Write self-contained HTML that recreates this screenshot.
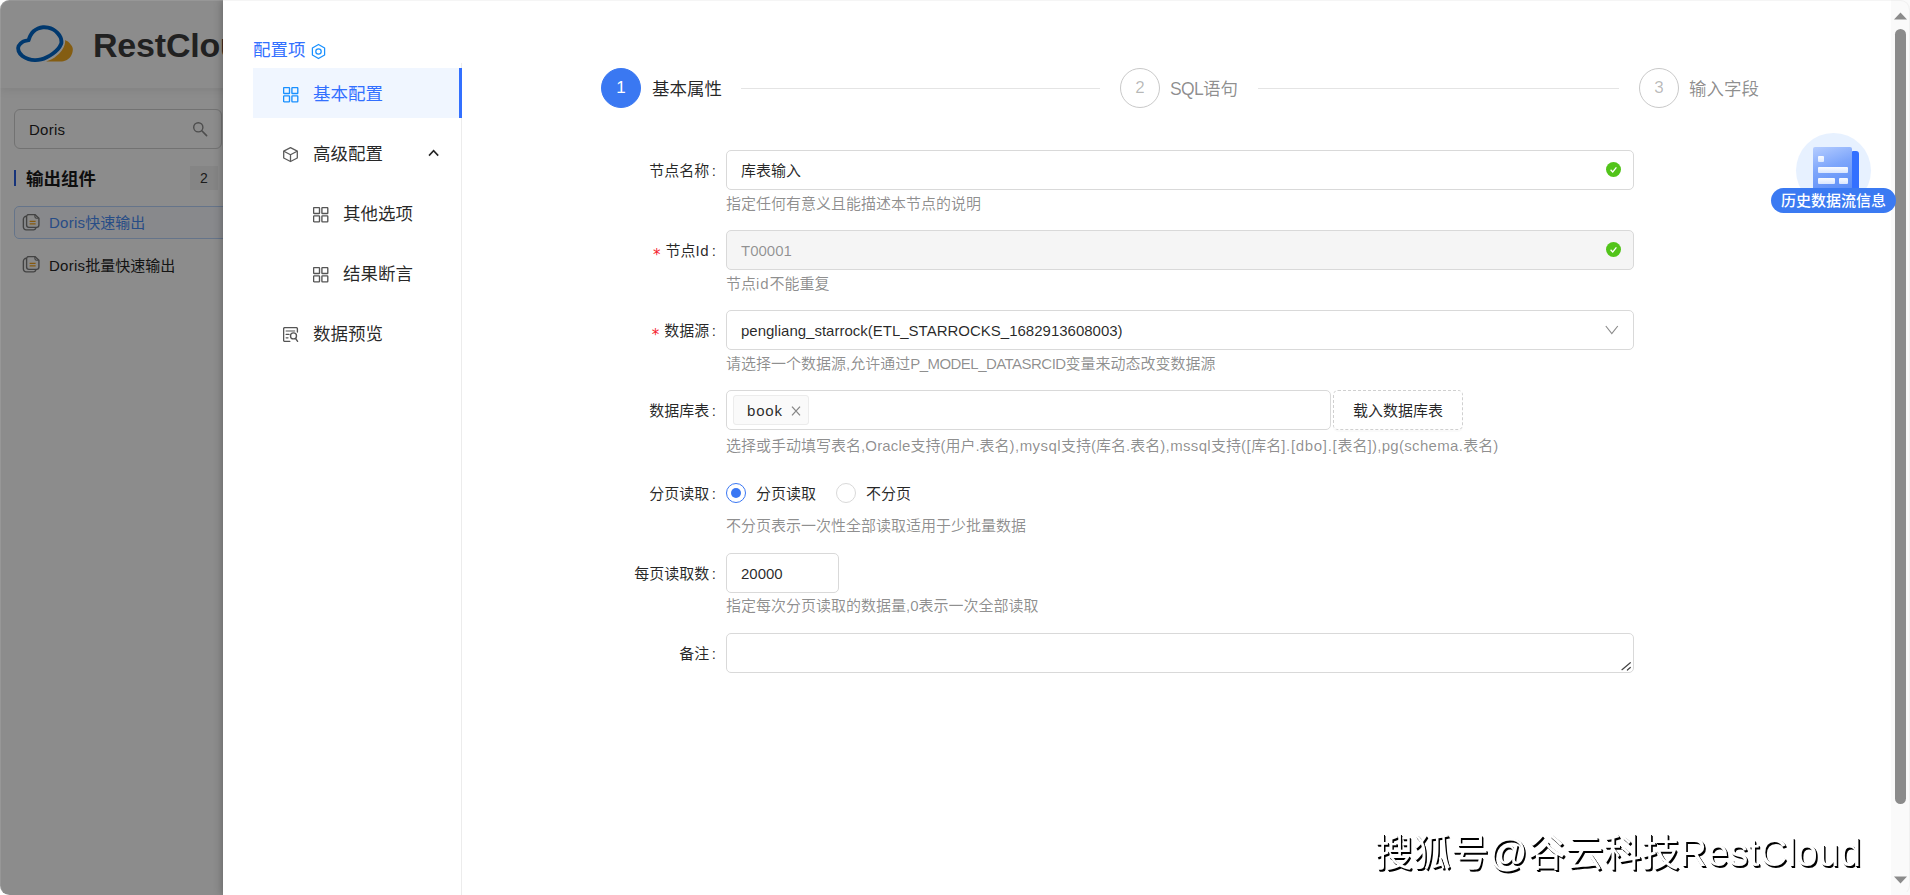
<!DOCTYPE html>
<html lang="zh-CN">
<head>
<meta charset="utf-8">
<title>RestCloud ETL - 库表输入</title>
<style>
*{box-sizing:border-box;margin:0;padding:0}
html,body{width:1910px;height:895px;overflow:hidden;background:#fff}
body{position:relative;font-family:"Liberation Sans","Noto Sans CJK SC",sans-serif;font-size:15px;color:rgba(0,0,0,.85);-webkit-font-smoothing:antialiased}
.abs{position:absolute}
/* ---------- underlying page (dimmed by mask) ---------- */
#page{position:absolute;left:0;top:0;width:240px;height:895px;background:#fff;border-radius:9.5px 0 0 9.5px;overflow:hidden}
#hdr{position:absolute;left:0;top:0;width:240px;height:88px;background:#fff;box-shadow:0 2px 9px rgba(0,0,0,.085);z-index:2}
#logo-txt{position:absolute;left:93px;top:25px;font-size:34px;line-height:40px;font-weight:bold;color:#3d3d3d;letter-spacing:-.2px;white-space:nowrap}
#side{position:absolute;left:0;top:88px;width:240px;height:807px;background:#fff}
#search{position:absolute;left:14px;top:109px;width:208px;height:40px;border:1px solid #d0d0d0;border-radius:6px;background:#fff}
#search span{position:absolute;left:14px;top:0;line-height:39px;font-size:15px;color:#1f1f1f}
#grp-bar{position:absolute;left:13.5px;top:170px;width:2.5px;height:16px;background:#2b5fe0}
#grp-t{position:absolute;left:26px;top:167px;font-size:17.5px;line-height:24px;font-weight:bold;color:#1a1a1a;white-space:nowrap}
#grp-n{position:absolute;left:190px;top:166px;width:28px;height:24px;background:#f3f3f3;text-align:center;line-height:24px;font-size:14px;color:#333}
.li{position:absolute;left:14px;width:230px;height:33px;border-radius:5px;white-space:nowrap}
.li span{position:absolute;left:35px;top:0;line-height:32px;font-size:15px}
.li svg{position:absolute;left:8px;top:6.4px}
#li1{top:206px;border:1px solid #b9d4fb;background:#f7faff}
#li1 span{color:#4a8cf5;left:34px;line-height:31px}
#li1 svg{left:7px;top:6.6px}
#li2{top:250px}
#li2 span{color:#262626}
#mask{position:absolute;left:0;top:0;width:240px;height:895px;background:rgba(0,0,0,.45);z-index:5;border-radius:9.5px 0 0 9.5px}
/* ---------- drawer ---------- */
#drawer{position:absolute;left:223px;top:0;width:1687px;height:895px;background:#fff;z-index:10;box-shadow:-1px 0 8px rgba(0,0,0,.27)}
#cfg-t{position:absolute;left:30px;top:38px;font-size:17.5px;line-height:24px;color:#3370ff;white-space:nowrap}
#menu-line{position:absolute;left:238px;top:63px;width:1px;height:832px;background:#ececec}
.mi{position:absolute;left:30px;width:209px;height:50px;line-height:52px;font-size:17.5px;color:rgba(0,0,0,.85);white-space:nowrap}
.mi span{position:absolute;left:60px;top:0}
.mi svg{position:absolute;left:30px;top:19px}
.mi.sub span{left:90px}
.mi.sub svg{left:60px}
.mi.act{background:#f0f6ff;color:#3370ff}
.mi.act:after{content:"";position:absolute;right:0;top:0;width:3px;height:50px;background:#3370ff}
/* steps */
.st-c{position:absolute;top:68px;width:40px;height:40px;border-radius:50%;border:1px solid #c9c9c9;text-align:center;line-height:38px;font-size:17px;color:rgba(0,0,0,.28)}
.st-c.on{background:#3a78f2;border-color:#3a78f2;color:#fff}
.st-t{position:absolute;top:75px;font-size:17.5px;line-height:28px;color:rgba(0,0,0,.45);white-space:nowrap}
.st-t.on{color:rgba(0,0,0,.85)}
.st-l{position:absolute;top:88px;height:1px;background:#e4e4e4}
/* form */
.lb{position:absolute;left:330px;width:165px;text-align:right;font-size:15px;line-height:42px;color:rgba(0,0,0,.85);white-space:nowrap}
.lb i{font-style:normal;color:#f5222d;font-size:15px;margin-right:5px;font-family:"DejaVu Sans","Liberation Sans",sans-serif;position:relative;top:4px}
.ip{position:absolute;left:503px;height:40px;border:1px solid #d9d9d9;border-radius:5px;background:#fff;font-size:15px;line-height:40px;padding-left:14px;color:rgba(0,0,0,.85);white-space:nowrap}
.ip.dis{background:#f5f5f5;color:rgba(0,0,0,.42)}
.ht{position:absolute;left:503px;font-size:15px;line-height:22px;color:rgba(0,0,0,.45);white-space:nowrap}
.ok{position:absolute;left:1383px;width:16px;height:16px}

.mi svg{position:absolute}
.lb b{font-weight:normal;margin-left:2.7px;margin-right:2px}
#tag{position:absolute;left:510px;top:395px;width:76px;height:30px;border:1px solid #ececec;background:#fafafa;border-radius:3px;font-size:15px;line-height:29px;color:rgba(0,0,0,.85)}
#tag span{position:absolute;left:13px;top:0}
#tag svg{position:absolute;left:57px;top:9.5px}
#btn-load{position:absolute;left:1110px;top:390px;width:130px;height:40px;border:1px dashed #d0d0d0;border-radius:5px;text-align:center;font-size:15px;line-height:40px;color:rgba(0,0,0,.85);box-shadow:0 2px 0 rgba(0,0,0,.018)}
.rd{position:absolute;top:483px;width:20px;height:20px;border-radius:50%;border:1px solid #d9d9d9;background:#fff}
.rd.on{border-color:#3a77f3}
.rd.on:after{content:"";position:absolute;left:4px;top:4px;width:10px;height:10px;border-radius:50%;background:#3a77f3}
.rt{position:absolute;top:473px;line-height:42px;font-size:15px;color:rgba(0,0,0,.85);white-space:nowrap}
#fl-c{position:absolute;left:1573px;top:133px;width:75px;height:75px;border-radius:50%;background:#e7f1ff}
#fl-doc{position:absolute;left:1590px;top:147px;width:39px;height:42px;border-radius:2px 2px 0 0;background:linear-gradient(160deg,#b5cdff 0%,#7ea6fb 45%,#5a8cf6 100%)}
#fl-doc i{position:absolute;background:linear-gradient(180deg,#fff,#dfeaff);border-radius:1px;opacity:.95}
#fl-side{position:absolute;left:1629px;top:150.5px;width:6.5px;height:40px;border-radius:1px 3px 0 0;background:#3370ff}
#fl-p{position:absolute;left:1548px;top:188px;width:125px;height:25px;border-radius:13px;background:#3b7af2;color:#fff;font-size:15px;font-weight:500;line-height:25px;text-align:center;white-space:nowrap;z-index:3}
#sb{position:absolute;left:1668px;top:0;width:19px;height:895px;background:#fafafa}
#sb-th{position:absolute;left:4px;top:29px;width:11px;height:775px;border-radius:6px;background:#8b8b8b}
#wm{position:absolute;left:1152px;top:827.5px;will-change:transform;font-size:38px;line-height:50px;color:#fff;white-space:nowrap;text-shadow:1px 1px 0 #000,1.6px 1.6px 0 #000}
.li em{font-style:normal;letter-spacing:.27px}
#frame{position:absolute;left:0;top:0;width:1910px;height:895px;border:1px solid rgba(203,203,203,.19);border-bottom-color:transparent;border-radius:9.5px;z-index:50;pointer-events:none}
</style>
</head>
<body>

<!-- underlying page -->
<div id="page">
  <div id="side"></div>
  <div id="hdr">
    <svg class="abs" style="left:8px;top:16px" width="80" height="56" viewBox="0 0 80 56"><path d="M57.20 24.10 C57.83 24.50 59.82 25.35 61.00 26.50 C62.18 27.65 63.68 29.58 64.30 31.00 C64.92 32.42 64.92 33.50 64.70 35.00 C64.48 36.50 63.87 38.57 63.00 40.00 C62.13 41.43 60.83 42.73 59.50 43.60 C58.17 44.47 55.75 45.4 54.00 45.5 L38.1 45.6 C39.25 45.08 42.81 43.85 45.00 42.50 C47.19 41.15 49.58 39.17 51.25 37.50 C52.92 35.83 54.06 34.17 55.00 32.50 C55.94 30.83 56.53 28.90 56.90 27.50 C57.27 26.10 57.15 24.67 57.20 24.10 Z" fill="#f0a922"/><path d="M20.60 24.10 C19.67 24.35 16.67 24.62 15.00 25.60 C13.33 26.58 11.33 28.43 10.60 30.00 C9.87 31.57 9.97 33.33 10.60 35.00 C11.23 36.67 12.73 38.65 14.40 40.00 C16.07 41.35 18.52 42.42 20.60 43.10 C22.68 43.78 24.82 44.05 26.90 44.10 C28.98 44.15 31.12 43.88 33.10 43.40 C35.08 42.92 36.77 42.23 38.75 41.25 C40.73 40.27 43.12 38.86 45.00 37.50 C46.88 36.14 48.65 34.67 50.00 33.10 C51.35 31.53 52.53 29.45 53.10 28.10 C53.67 26.75 53.50 26.14 53.40 25.00 C53.30 23.86 53.17 22.60 52.50 21.25 C51.83 19.90 50.65 18.21 49.40 16.90 C48.15 15.59 46.57 14.28 45.00 13.40 C43.43 12.52 41.67 11.96 40.00 11.60 C38.33 11.24 36.67 11.10 35.00 11.25 C33.33 11.40 31.57 11.82 30.00 12.50 C28.43 13.18 26.85 14.15 25.60 15.30 C24.35 16.45 23.33 17.93 22.50 19.40 C21.67 20.87 20.92 23.32 20.60 24.10 Z" fill="none" stroke="#0066c8" stroke-width="3.9" stroke-linejoin="miter"/></svg>
    <div id="logo-txt">RestCloud</div>
  </div>
  <div id="search"><span style="letter-spacing:.27px">Doris</span>
    <svg class="abs" style="left:177px;top:11px" width="16" height="16" viewBox="0 0 16 16"><circle cx="6.3" cy="6.3" r="4.6" fill="none" stroke="#8c8c8c" stroke-width="1.4"/><path d="M9.8 9.8 L14.6 14.6" stroke="#8c8c8c" stroke-width="1.6" stroke-linecap="round"/></svg>
  </div>
  <div id="grp-bar"></div>
  <div id="grp-t">输出组件</div>
  <div id="grp-n">2</div>
  <div class="li" id="li1">
    <svg width="18.4" height="18.4" viewBox="0 0 20 20"><path d="M4.8 2.5 a3.2 3.2 0 0 0 -3.3 3.2 V14.2 a3 3 0 0 0 3 3 H12.6 a2.6 2.6 0 0 0 2.4 -1.6" fill="none" stroke="#7a7a7a" stroke-width="1.5" stroke-linecap="round"/><path d="M5 3 a2.5 2.5 0 0 1 2.500 -2.500 H14 L18.4 4.6 V12 a2.5 2.5 0 0 1 -2.500 2.500 H7.500 a2.500 2.500 0 0 1 -2.500 -2.500 Z" fill="#fafafa" stroke="#7a7a7a" stroke-width="1.5" stroke-linejoin="round"/><path d="M14 .8 V2.800 a1.800 1.800 0 0 0 1.800 1.800 H18" fill="none" stroke="#7a7a7a" stroke-width="1.2"/><path d="M8.300 8 H14.800 M8.300 10.700 H14.800" stroke="#f5a31a" stroke-width="1.400"/></svg>
    <span><em>Doris</em>快速输出</span>
  </div>
  <div class="li" id="li2">
    <svg width="18.4" height="18.4" viewBox="0 0 20 20"><path d="M4.8 2.5 a3.2 3.2 0 0 0 -3.3 3.2 V14.2 a3 3 0 0 0 3 3 H12.6 a2.6 2.6 0 0 0 2.4 -1.6" fill="none" stroke="#7a7a7a" stroke-width="1.5" stroke-linecap="round"/><path d="M5 3 a2.5 2.5 0 0 1 2.500 -2.500 H14 L18.4 4.6 V12 a2.5 2.5 0 0 1 -2.500 2.500 H7.500 a2.500 2.500 0 0 1 -2.500 -2.500 Z" fill="#fafafa" stroke="#7a7a7a" stroke-width="1.5" stroke-linejoin="round"/><path d="M14 .8 V2.800 a1.800 1.800 0 0 0 1.800 1.800 H18" fill="none" stroke="#7a7a7a" stroke-width="1.2"/><path d="M8.300 8 H14.800 M8.300 10.700 H14.800" stroke="#f5a31a" stroke-width="1.400"/></svg>
    <span><em>Doris</em>批量快速输出</span>
  </div>
</div>
<div id="mask"></div>

<!-- drawer -->
<div id="drawer">
  <div id="cfg-t">配置项</div>
  <svg class="abs" style="left:88px;top:43px" width="16" height="17" viewBox="0 0 16 17"><path d="M7.5 1.5 L13.6 5 V12 L7.5 15.5 L1.4 12 V5 Z" fill="none" stroke="#1890ff" stroke-width="1.25" stroke-linejoin="round"/><circle cx="7.5" cy="8.5" r="2.7" fill="none" stroke="#1890ff" stroke-width="1.25"/></svg>
  <div id="menu-line"></div>

  <div class="mi act" style="top:68px"><svg width="16" height="16" viewBox="0 0 16 16"><g fill="none" stroke="#1890ff" stroke-width="1.35"><rect x=".6" y=".6" width="5.9" height="5.9" rx=".6"/><rect x="8.9" y=".6" width="5.9" height="5.9" rx=".6"/><rect x=".6" y="8.9" width="5.9" height="5.9" rx=".6"/><rect x="8.9" y="8.9" width="5.9" height="5.9" rx=".6"/></g></svg><span>基本配置</span></div>
  <div class="mi" style="top:128px"><svg width="16" height="16" viewBox="0 0 16 16"><g fill="none" stroke="#5c5c5c" stroke-width="1.3" stroke-linejoin="round"><path d="M7.5 .6 L14.3 4.1 V11 L7.5 14.5 L.7 11 V4.1 Z"/><path d="M.9 4.2 L7.5 7.7 L14.1 4.2 M7.5 7.7 V14.4"/></g></svg><span>高级配置</span>
    <svg style="left:175px;top:21px" width="12" height="8" viewBox="0 0 12 8"><path d="M1 6.6 L5.6 1.6 L10.2 6.6" fill="none" stroke="#262626" stroke-width="1.6"/></svg></div>
  <div class="mi sub" style="top:188px"><svg width="16" height="16" viewBox="0 0 16 16"><g fill="none" stroke="#555" stroke-width="1.35"><rect x=".6" y=".6" width="5.9" height="5.9" rx=".6"/><rect x="8.9" y=".6" width="5.9" height="5.9" rx=".6"/><rect x=".6" y="8.9" width="5.9" height="5.9" rx=".6"/><rect x="8.9" y="8.9" width="5.9" height="5.9" rx=".6"/></g></svg><span>其他选项</span></div>
  <div class="mi sub" style="top:248px"><svg width="16" height="16" viewBox="0 0 16 16"><g fill="none" stroke="#555" stroke-width="1.35"><rect x=".6" y=".6" width="5.9" height="5.9" rx=".6"/><rect x="8.9" y=".6" width="5.9" height="5.9" rx=".6"/><rect x=".6" y="8.9" width="5.9" height="5.9" rx=".6"/><rect x="8.9" y="8.9" width="5.9" height="5.9" rx=".6"/></g></svg><span>结果断言</span></div>
  <div class="mi" style="top:308px"><svg width="16" height="16" viewBox="0 0 16 16"><g fill="none" stroke="#555" stroke-width="1.35" stroke-linecap="round"><path d="M14.4 5 V1.8 a1.2 1.2 0 0 0 -1.2 -1.2 H1.8 a1.2 1.2 0 0 0 -1.2 1.2 V13.2 a1.2 1.2 0 0 0 1.2 1.2 H6.8"/><path d="M3.2 4 H11.6" stroke="#8c8c8c"/><path d="M3.2 7.4 H6 M3.2 10.8 H5"/><circle cx="10.5" cy="8.9" r="3"/><path d="M12.6 11.5 L14.6 14.4"/></g></svg><span>数据预览</span></div>

  <!-- steps -->
  <div class="st-c on" style="left:378px">1</div>
  <div class="st-t on" style="left:429px">基本属性</div>
  <div class="st-l" style="left:518px;width:359px"></div>
  <div class="st-c" style="left:897px">2</div>
  <div class="st-t" style="left:947px"><span style="letter-spacing:-.7px">SQL</span>语句</div>
  <div class="st-l" style="left:1035px;width:361px"></div>
  <div class="st-c" style="left:1416px">3</div>
  <div class="st-t" style="left:1466px">输入字段</div>

  <!-- form -->
  <div class="lb" style="top:150px">节点名称<b>:</b></div>
  <div class="ip" style="top:150px;width:908px">库表输入</div>
  <svg class="ok" style="top:162px" viewBox="0 0 16 16"><circle cx="7.5" cy="7.5" r="7.5" fill="#52c41a"/><path d="M4.6 7.8 L6.7 10 L10.4 5.3" fill="none" stroke="#fff" stroke-width="1.3"/></svg>
  <div class="ht" style="top:193px">指定任何有意义且能描述本节点的说明</div>

  <div class="lb" style="top:230px"><i>*</i>节点<span style="letter-spacing:.59px">Id</span><b>:</b></div>
  <div class="ip dis" style="top:230px;width:908px">T00001</div>
  <svg class="ok" style="top:242px" viewBox="0 0 16 16"><circle cx="7.5" cy="7.5" r="7.5" fill="#52c41a"/><path d="M4.6 7.8 L6.7 10 L10.4 5.3" fill="none" stroke="#fff" stroke-width="1.3"/></svg>
  <div class="ht" style="top:273px">节点<span style="letter-spacing:.87px">id</span>不能重复</div>

  <div class="lb" style="top:310px"><i>*</i>数据源<b>:</b></div>
  <div class="ip" style="top:310px;width:908px">pengliang_starrock(ETL_STARROCKS_1682913608003)</div>
  <svg class="abs" style="left:1382px;top:325px" width="14" height="10" viewBox="0 0 14 10"><path d="M.8 1 L6.8 8.6 L12.8 1" fill="none" stroke="#8c8c8c" stroke-width="1.15"/></svg>
  <div class="ht" style="top:353px">请选择一个数据源,允许通过<span style="letter-spacing:-.533px">P_MODEL_DATASRCID</span>变量来动态改变数据源</div>

  <div class="lb" style="top:390px">数据库表<b>:</b></div>
  <div class="ip" style="top:390px;width:605px"></div>
  <div id="tag"><span style="letter-spacing:.8px">book</span><svg width="10" height="10" viewBox="0 0 10 10"><path d="M1 .6 L9 9.4 M9 .6 L1 9.4" stroke="#858585" stroke-width="1.25" fill="none"/></svg></div>
  <div id="btn-load">载入数据库表</div>
  <div class="ht" style="top:435px">选择或手动填写表名<span style="letter-spacing:.147px">,Oracle</span>支持(用户.表名<span style="letter-spacing:.455px">),mysql</span>支持(库名.表名<span style="letter-spacing:.342px">),mssql</span>支持<span style="letter-spacing:.48px">([</span>库名<span style="letter-spacing:.69px">].[dbo].[</span>表名<span style="letter-spacing:.31px">]),pg(schema.</span>表名)</div>

  <div class="lb" style="top:473px">分页读取<b>:</b></div>
  <div class="rd on" style="left:503px"></div><div class="rt" style="left:533px">分页读取</div>
  <div class="rd" style="left:613px"></div><div class="rt" style="left:643px">不分页</div>
  <div class="ht" style="top:515px">不分页表示一次性全部读取适用于少批量数据</div>

  <div class="lb" style="top:553px">每页读取数<b>:</b></div>
  <div class="ip" style="top:553px;width:113px">20000</div>
  <div class="ht" style="top:595px">指定每次分页读取的数据量,0表示一次全部读取</div>

  <div class="lb" style="top:633px">备注<b>:</b></div>
  <div class="ip" style="top:633px;width:908px"></div>
  <svg class="abs" style="left:1397.5px;top:661px" width="10" height="10" viewBox="0 0 10 10"><path d="M1 8.7 L9.3 1.7 M6.4 9 L9.3 6.5" stroke="#444" stroke-width="1.2" fill="none" stroke-linecap="round"/></svg>

  <!-- floating history widget -->
  <div id="fl-c"></div>
  <div id="fl-doc"><i style="left:5px;top:9px;width:6px;height:6px"></i><i style="left:5px;top:20px;width:30px;height:6px"></i><i style="left:5px;top:31px;width:17px;height:6px"></i><i style="left:26px;top:31px;width:9px;height:6px"></i></div>
  <div id="fl-side"></div>
  <div id="fl-p">历史数据流信息</div>

  <!-- scrollbar -->
  <div id="sb"><div id="sb-th"></div>
    <svg class="abs" style="left:3px;top:11.5px" width="14" height="8" viewBox="0 0 14 8"><path d="M0 7.5 L6.5 .5 L13 7.5 Z" fill="#8b8b8b"/></svg>
    <svg class="abs" style="left:3px;top:875.5px" width="14" height="8" viewBox="0 0 14 8"><path d="M0 .5 L6.5 7.5 L13 .5 Z" fill="#8b8b8b"/></svg>
  </div>

  <div id="wm">搜狐号@谷云科技<span style="letter-spacing:.5px">RestCloud</span></div>
</div>

<div id="frame"></div>
</body>
</html>
